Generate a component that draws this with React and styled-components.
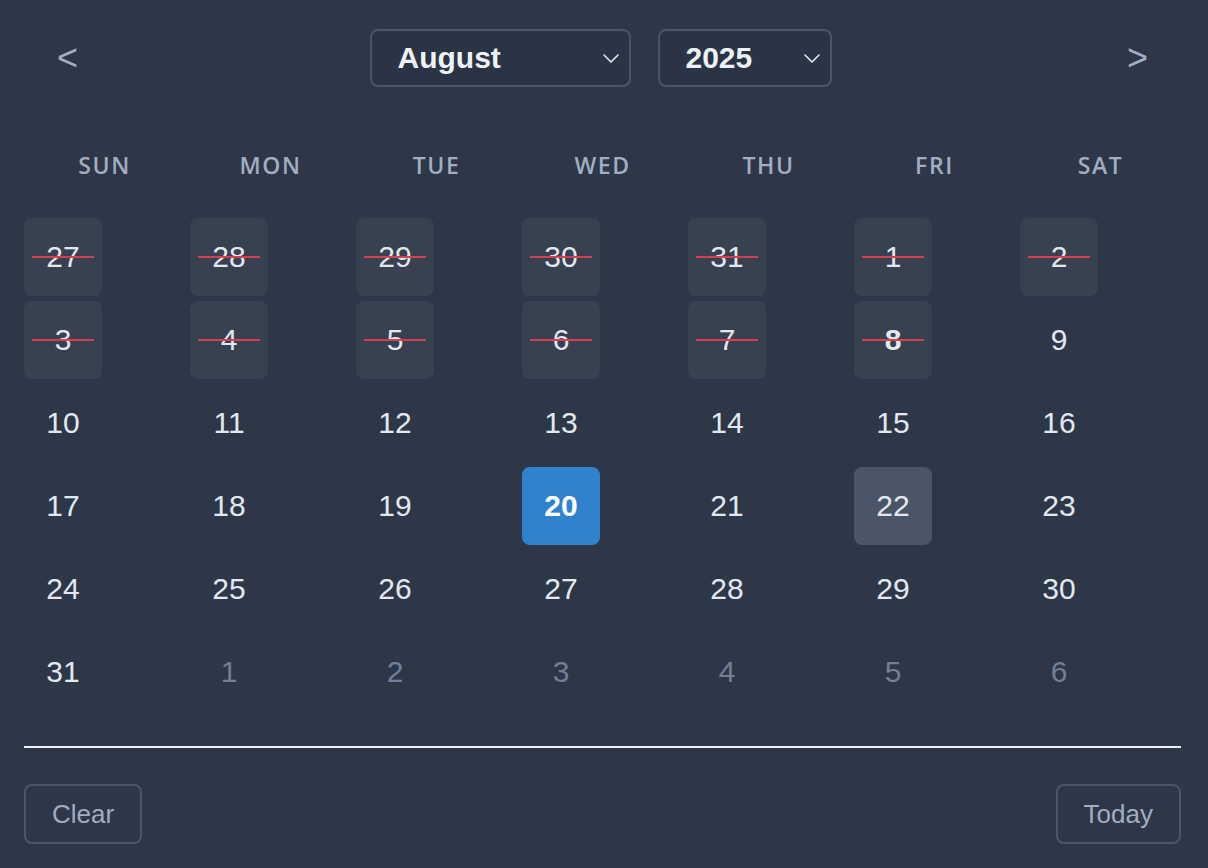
import React from 'react'
import styled, { createGlobalStyle } from 'styled-components'

const GlobalStyle = createGlobalStyle`
	html, body {
		margin: 0;
		padding: 0;
		background: #2d3748;
	}
	body {
		font-family: 'Liberation Sans', Arial, sans-serif;
		color: #e2e8f0;
	}
`

const WEEKDAYS = ['SUN', 'MON', 'TUE', 'WED', 'THU', 'FRI', 'SAT']

// August 2025, starting from the last days of July
const buildDays = () => {
	const days = []
	;[27, 28, 29, 30, 31].forEach((d) => days.push({ day: d, outside: false, blocked: true }))
	for (let d = 1; d <= 31; d++) {
		days.push({ day: d, blocked: d <= 8, today: d === 8, selected: d === 20, hover: d === 22 })
	}
	for (let d = 1; d <= 6; d++) days.push({ day: d, outside: true })
	return days
}

const Chevron = () => (
	<svg width='18' height='11' viewBox='0 0 18 11' fill='none'>
		<path d='M2 2l7 7 7-7' stroke='#e2e8f0' strokeWidth='1.6' strokeLinecap='round' strokeLinejoin='round' />
	</svg>
)

const Calendar = () => {
	const days = buildDays()

	return (
		<Wrapper>
			<Header>
				<NavButton>&lt;</NavButton>
				<Selects>
					<Select width={261}>
						<span>August</span>
						<Chevron />
					</Select>
					<Select width={174}>
						<span>2025</span>
						<Chevron />
					</Select>
				</Selects>
				<NavButton>&gt;</NavButton>
			</Header>

			<WeekRow>
				{WEEKDAYS.map((w) => (
					<WeekLabel key={w}>{w}</WeekLabel>
				))}
			</WeekRow>

			<DayGrid>
				{days.map((d, i) => (
					<DayCell
						key={i}
						$blocked={d.blocked}
						$selected={d.selected}
						$hover={d.hover}
						$outside={d.outside}
						$today={d.today}>
						{d.day}
					</DayCell>
				))}
			</DayGrid>

			<Divider />

			<Footer>
				<FooterButton>Clear</FooterButton>
				<FooterButton>Today</FooterButton>
			</Footer>
		</Wrapper>
	)
}

const Wrapper = styled.div`
	width: 1157px;
	padding: 29px 0 0 24px;
	box-sizing: content-box;
`

const Header = styled.div`
	display: flex;
	align-items: center;
	justify-content: space-between;
	height: 58px;
	padding: 0 33px;
`

const NavButton = styled.button`
	background: none;
	border: none;
	color: #a0aec0;
	font-family: 'Liberation Sans', Arial, sans-serif;
	font-size: 36px;
	padding: 0;
	line-height: 1;
	cursor: pointer;
`

const Selects = styled.div`
	display: flex;
	gap: 27px;
	margin-left: -4px;
`

const Select = styled.div`
	width: ${(p) => p.width}px;
	height: 58px;
	box-sizing: border-box;
	border: 2px solid #4a5568;
	border-radius: 8px;
	background: #2a3444;
	display: flex;
	align-items: center;
	justify-content: space-between;
	padding: 0 9px 0 26px;
	font-size: 30px;
	font-weight: 700;
	color: #edf2f7;
`

const WeekRow = styled.div`
	display: grid;
	grid-template-columns: repeat(7, 166px);
	margin-top: 58px;
	height: 40px;
	align-items: center;
`

const WeekLabel = styled.div`
	text-align: center;
	padding-right: 5px;
	font-family: 'Open Sans', 'Noto Sans', sans-serif;
	font-weight: 600;
	font-size: 23px;
	letter-spacing: 1.6px;
	color: #a0aec0;
`

const DayGrid = styled.div`
	display: grid;
	grid-template-columns: repeat(7, 166px);
	row-gap: 5px;
	margin-top: 33px;
`

const DayCell = styled.div`
	position: relative;
	width: 78px;
	height: 78px;
	border-radius: 8px;
	display: flex;
	align-items: center;
	justify-content: center;
	font-size: 30px;
	font-weight: ${(p) => (p.$selected || p.$today ? 700 : 400)};
	color: ${(p) => (p.$outside ? '#718096' : p.$selected ? '#ffffff' : '#e2e8f0')};
	background: ${(p) =>
		p.$selected ? '#3182ce' : p.$hover ? '#4a5568' : p.$blocked ? '#38414f' : 'transparent'};

	&::after {
		content: '';
		display: ${(p) => (p.$blocked ? 'block' : 'none')};
		position: absolute;
		left: 8px;
		right: 8px;
		top: 38px;
		height: 2px;
		background: #d53f4f;
	}
`

const Divider = styled.div`
	height: 2px;
	background: #edf2f7;
	margin-top: 35px;
`

const Footer = styled.div`
	display: flex;
	justify-content: space-between;
	margin-top: 36px;
`

const FooterButton = styled.button`
	height: 60px;
	padding: 0 26px;
	background: transparent;
	border: 2px solid #4a5568;
	border-radius: 8px;
	color: #a0aec0;
	font-family: 'Liberation Sans', Arial, sans-serif;
	font-size: 26px;
	cursor: pointer;
`

export default function App() {
	return (
		<>
			<GlobalStyle />
			<Calendar />
		</>
	)
}
